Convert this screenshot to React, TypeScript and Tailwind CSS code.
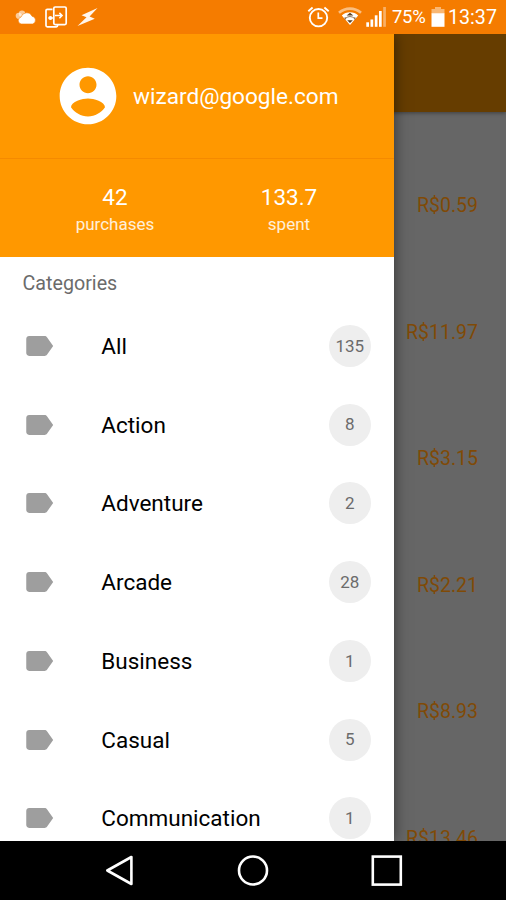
import React from 'react';

interface Category {
  name: string;
  count: number;
}

const categories: Category[] = [
  { name: 'All', count: 135 },
  { name: 'Action', count: 8 },
  { name: 'Adventure', count: 2 },
  { name: 'Arcade', count: 28 },
  { name: 'Business', count: 1 },
  { name: 'Casual', count: 5 },
  { name: 'Communication', count: 1 },
];

const prices = ['R$0.59', 'R$11.97', 'R$3.15', 'R$2.21', 'R$8.93', 'R$13.46'];

const StatusBar: React.FC = () => (
  <div className="h-[34px] shrink-0 bg-[#f57c00] text-white flex items-center justify-between">
    {/* Notifications */}
    <svg width="110" height="34" viewBox="0 0 110 34" fill="none">
      <g fill="#fff" fillOpacity="0.6">
        <circle cx="22" cy="13.6" r="3.2" />
        <circle cx="18.8" cy="15.8" r="3.1" />
      </g>
      <path
        d="M21.5 24a3.5 3.5 0 0 1-.5-6.9 5.9 5.9 0 0 1 11-.9 4 4 0 0 1 .6 7.8z"
        fill="#fff"
        stroke="#f57c00"
        strokeWidth="0.6"
      />
      <g stroke="#fff" strokeWidth="1.7">
        <path d="M52.5 9.3h-5.2a1.3 1.3 0 0 0-1.3 1.3v15a1.3 1.3 0 0 0 1.3 1.3h9a1.3 1.3 0 0 0 1.3-1.3v-.8" />
        <rect x="53.8" y="7" width="12.4" height="17.6" rx="1.3" />
        <path d="M55 15.6h6.8M59.4 12.9l2.7 2.7-2.7 2.7" strokeWidth="1.5" />
        <path d="M48.5 18h5.5" strokeWidth="1.4" />
      </g>
      <circle cx="50.4" cy="18" r="2" fill="#fff" />
      <path d="M97.5 8 81.5 15.2l5 2L77.5 26l17.3-7.3-5.2-2.3z" fill="#fff" fillOpacity="0.93" />
    </svg>

    {/* System icons and clock */}
    <div className="flex items-center pr-[9px]">
      <svg width="84" height="34" viewBox="304 0 84 34" fill="none">
        <g stroke="#fff" strokeWidth="1.9">
          <circle cx="318.5" cy="17.7" r="8.7" />
          <path d="M318.3 12.4v5.8h4.2" strokeWidth="1.7" />
          <path d="M308.3 11.2l4.3-3.7M328.7 11.2l-4.3-3.7" />
        </g>
        <path d="M339 12.8a16.5 16.5 0 0 1 22 0" stroke="#fff" strokeOpacity="0.5" strokeWidth="2.6" />
        <path d="M341.8 15.6a12 12 0 0 1 16.4 0L350 25z" fill="#fff" />
        <path d="M345.4 18.4a7.3 7.3 0 0 1 9.2 0" stroke="#704a20" strokeOpacity="0.75" strokeWidth="1" />
        <path d="M346.6 15.6l3.4-2.8 3.4 2.8zM347.2 20.2h5.6L350 23z" fill="#5c4326" />
        <path d="M345.2 17.2v2.4M354.8 17.2v2.4" stroke="#704a20" strokeOpacity="0.8" strokeWidth="1.2" />
        <g fill="#fff">
          <rect x="366.3" y="22.3" width="2.7" height="4.5" />
          <rect x="370.5" y="19.5" width="2.7" height="7.3" />
          <rect x="374.8" y="15.3" width="2.7" height="11.5" />
          <rect x="379" y="11" width="2.7" height="15.8" />
          <rect x="383.2" y="7" width="2.7" height="19.8" fillOpacity="0.4" />
        </g>
      </svg>
      <span className="ml-[4px] pt-[2px] w-[34px] text-[18.5px] tracking-[-0.3px] whitespace-nowrap">75%</span>
      <svg className="ml-[5px]" width="15" height="34" viewBox="0 0 15 34">
        <path d="M4 7h6v2h3.5v4.5h-13V9H4z" fill="#fff" fillOpacity="0.45" />
        <rect x="0.5" y="13.2" width="13" height="13.6" fill="#fff" />
      </svg>
      <span className="ml-[2px] pt-[2px] text-[19.7px] whitespace-nowrap">13:37</span>
    </div>
  </div>
);

const DrawerHeader: React.FC = () => (
  <div className="h-[223px] shrink-0 bg-[#ff9800] text-white">
    <div className="h-[125px] border-b border-[#f58a00] flex items-center justify-center gap-[11px] pr-[1px]">
      <svg width="68" height="68" viewBox="0 0 24 24" fill="#fff">
        <path d="M12 2C6.48 2 2 6.48 2 12s4.48 10 10 10 10-4.48 10-10S17.52 2 12 2zm0 3c1.66 0 3 1.34 3 3s-1.34 3-3 3-3-1.34-3-3 1.34-3 3-3zm0 14.2c-2.5 0-4.71-1.28-6-3.22.03-1.99 4-3.08 6-3.08 1.99 0 5.97 1.09 6 3.08-1.29 1.94-3.5 3.22-6 3.22z" />
      </svg>
      <span className="pt-[2px] text-[22.6px]">wizard@google.com</span>
    </div>

    <div className="flex pl-[28px] pt-[23px] text-center">
      <div className="w-[174px]">
        <div className="text-[22.5px] leading-[30px]">42</div>
        <div className="text-[17px] leading-[24px] text-white/85">purchases</div>
      </div>
      <div className="w-[174px]">
        <div className="text-[22.5px] leading-[30px]">133.7</div>
        <div className="text-[17px] leading-[24px] text-white/85">spent</div>
      </div>
    </div>
  </div>
);

const CategoryRow: React.FC<{ category: Category }> = ({ category }) => (
  <li className="h-[78.75px] shrink-0 flex items-center pl-[22.3px] pr-[22.7px]">
    <svg width="34" height="34" viewBox="0 0 24 24" fill="#9e9e9e">
      <path d="M17.63 5.84C17.27 5.33 16.67 5 16 5L5 5.01C3.9 5.01 3 5.9 3 7v10c0 1.1.9 1.99 2 1.99L16 19c.67 0 1.27-.33 1.63-.84L22 12l-4.37-6.16z" />
    </svg>
    <span className="ml-[45px] pt-[2px] flex-1 text-[22.5px] text-black">{category.name}</span>
    <span className="size-[42px] pt-[1px] rounded-full bg-[#eeeeee] text-[#6b6b6b] text-[17px] flex items-center justify-center">
      {category.count}
    </span>
  </li>
);

const NavBar: React.FC = () => (
  <div className="h-[59px] shrink-0 bg-black">
    <svg width="506" height="59" viewBox="0 0 506 59" fill="none" stroke="#fff" strokeWidth="2.6">
      <path d="M107.3 29.5 131.4 16v27z" strokeLinejoin="round" />
      <circle cx="253" cy="29.5" r="14" />
      <rect x="372.8" y="15.6" width="28" height="28" />
    </svg>
  </div>
);

const App: React.FC = () => {
  return (
    <div className="w-[506px] h-[900px] flex flex-col overflow-hidden font-[Roboto,sans-serif]">
      <StatusBar />

      <div className="relative flex-1 min-h-0 overflow-hidden">
        {/* Purchases list behind the drawer, dimmed */}
        <div className="h-full bg-[#666666]">
          <div className="h-[78px] bg-[#663d00] shadow-[0_1px_4px_rgba(0,0,0,0.4)]"></div>
          <ul className="pt-[30.3px] pr-[28px]">
            {prices.map((price) => (
              <li key={price} className="h-[126.6px] flex items-center justify-end text-[19.5px] text-[#804a06]">
                {price}
              </li>
            ))}
          </ul>
        </div>

        {/* Drawer */}
        <div className="absolute inset-y-0 left-0 w-[393.5px] flex flex-col bg-white shadow-[0_0_14px_rgba(0,0,0,0.5)]">
          <DrawerHeader />
          <h2 className="h-[49.4px] shrink-0 pl-[22.5px] pt-[12px] text-[19.7px] leading-[30px] text-[#6b6b6b]">
            Categories
          </h2>
          <ul className="flex flex-col min-h-0 overflow-hidden">
            {categories.map((category) => (
              <CategoryRow key={category.name} category={category} />
            ))}
          </ul>
        </div>
      </div>

      <NavBar />
    </div>
  );
};

export default App;
